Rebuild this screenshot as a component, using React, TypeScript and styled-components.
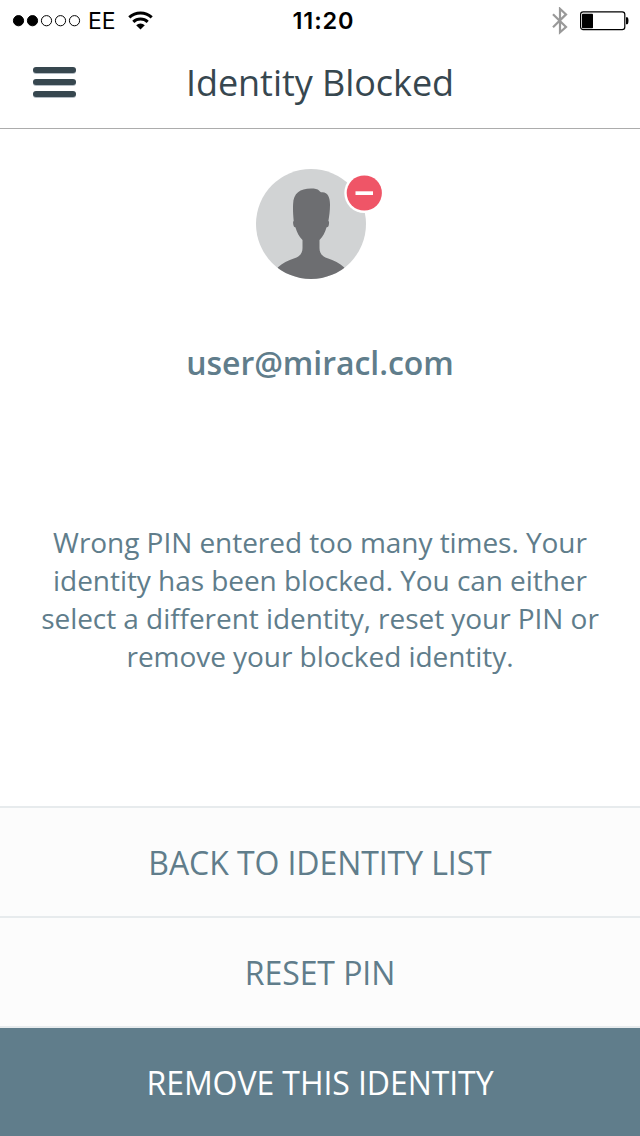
import React from "react";
import styled, { createGlobalStyle } from "styled-components";

const GlobalStyle = createGlobalStyle`
  *, *::before, *::after { box-sizing: border-box; }
  body { margin: 0; background: #fff; }
`;

const Screen = styled.div`
  display: flex;
  flex-direction: column;
  width: 640px;
  height: 1136px;
  overflow: hidden;
  background: #fff;
  color: #607d8b;
  font-family: "Open Sans", sans-serif;
`;

const StatusBar = styled.div`
  display: grid;
  grid-template-columns: 1fr auto 1fr;
  align-items: center;
  height: 40px;
  padding: 1px 11px 0 12px;
  color: #000;
  font-family: Inter, sans-serif;
`;

const StatusGroup = styled.div<{ $end?: boolean }>`
  display: flex;
  align-items: center;
  justify-content: ${(p) => (p.$end ? "flex-end" : "flex-start")};
`;

const Carrier = styled.span`
  margin: 0 12px 0 6px;
  font-size: 23px;
  line-height: 28px;
  font-weight: 400;
`;

const Clock = styled.span`
  padding-left: 6px;
  font-size: 23.5px;
  line-height: 28px;
  font-weight: 600;
  letter-spacing: 0.9px;
`;

const Header = styled.header`
  display: grid;
  grid-template-columns: 76px 1fr 76px;
  align-items: center;
  height: 89px;
  padding-bottom: 5px;
  border-bottom: 1px solid #acacac;
`;

const MenuButton = styled.button`
  display: flex;
  flex-direction: column;
  gap: 6px;
  width: 76px;
  padding: 0 0 0 32.5px;
  border: 0;
  background: none;
`;

const MenuBar = styled.span`
  width: 43px;
  height: 6px;
  border-radius: 3px;
  background: #37474f;
  box-shadow: 0 1px 0 #b4bcc4;
`;

const Title = styled.h1`
  margin: 0;
  padding-top: 2px;
  color: #37474f;
  font-size: 36px;
  line-height: 50px;
  font-weight: 400;
  letter-spacing: -0.05px;
  text-align: center;
`;

const Content = styled.main`
  display: flex;
  flex: 1;
  flex-direction: column;
  align-items: center;
  padding-top: 40px;
`;

const Avatar = styled.svg`
  display: block;
  width: 128px;
  height: 110px;
`;

const Email = styled.div`
  margin-top: 62px;
  font-size: 32px;
  line-height: 44px;
  font-weight: 600;
  letter-spacing: -0.05px;
`;

const Message = styled.p`
  width: 580px;
  margin: 138px 0 0;
  font-size: 28px;
  line-height: 38px;
  letter-spacing: -0.05px;
  text-align: center;
`;

const Actions = styled.div`
  display: flex;
  flex-direction: column;
`;

const ActionButton = styled.button<{ $filled?: boolean }>`
  height: 110px;
  padding: 2px 0 0;
  border: 0;
  border-top: 2px solid #e7ebed;
  background: ${(p) => (p.$filled ? "#607d8b" : "#fcfcfc")};
  color: ${(p) => (p.$filled ? "#fff" : "#607d8b")};
  font-family: inherit;
  font-size: 32px;
  line-height: 44px;
  letter-spacing: -0.08px;
  text-transform: uppercase;
`;

const SignalDots = () => (
  <svg width="70" height="14" viewBox="0 0 70 14" stroke="#000">
    {[0, 1, 2, 3, 4].map((i) => (
      <circle key={i} cx={6.5 + i * 14} cy="6.7" r="5.1" fill={i < 2 ? "#000" : "none"} />
    ))}
  </svg>
);

const WifiIcon = () => (
  <svg width="25" height="20" viewBox="0 0 25 20" fill="none" stroke="#000" strokeWidth="3">
    <path d="M1.3 6.4a16.2 16.2 0 0 1 22.4 0" />
    <path d="M5.3 10.9a10.4 10.4 0 0 1 14.4 0" />
    <path d="M12.5 18.4 8.2 14.2a6.2 6.2 0 0 1 8.6 0z" fill="#000" stroke="none" />
  </svg>
);

const BluetoothIcon = () => (
  <svg width="16" height="28" viewBox="0 0 16 28" fill="none" stroke="#999" strokeWidth="2.2">
    <path d="M1 7.2 14 20 8 25.4V1.8L14 7.4 1 20.2" />
  </svg>
);

const Battery = styled.svg`
  margin-left: 12px;
`;

const BatteryIcon = () => (
  <Battery width="49" height="20" viewBox="0 0 49 20">
    <rect x="0.6" y="0.9" width="44.2" height="17.8" rx="2.6" fill="none" stroke="#000" strokeWidth="1.2" />
    <rect x="2" y="2.7" width="11" height="14.6" rx="0.8" />
    <path d="M46 6.3h1.2c1.7 0 1.7 7 0 7H46z" />
  </Battery>
);

const BlockedAvatar = () => (
  <Avatar viewBox="0 0 128 110" overflow="visible">
    <defs>
      <clipPath id="avatar-clip">
        <circle cx="55" cy="55" r="55" />
      </clipPath>
    </defs>
    <circle cx="55" cy="55" r="55" fill="#d1d3d4" />
    <path
      clipPath="url(#avatar-clip)"
      fill="#6d6e71"
      d="M37.7 52C37.2 46 36.8 41 37.1 35C37.5 24 44 19.4 55 19.4C59 19.4 61.5 20 63 21.4C64 22.4 64.6 23.5 66.5 23.3C72 23.3 74.2 29 74 36C74 42 73.2 47 72.4 52C73.3 52.4 73.2 54 72.8 56C72.5 57.7 71.8 58.3 70.6 58.2C69.2 63 67 67.5 63.5 71V79C63.5 84 66 87.5 71.5 89.2C78 91.3 83.5 94 88.3 98.6V110H21.7V98.6C26.5 94 32 91.3 38.5 89.2C44 87.5 46.5 84 46.5 79V71C43 67.5 40.8 63 39.4 58.2C38.2 58.3 37.8 57.7 37.4 56C37 54 36.8 52.4 37.7 52Z"
    />
    <circle cx="108.3" cy="24" r="20" fill="#fff" />
    <circle cx="108.3" cy="24" r="17.6" fill="#ef5567" />
    <rect x="99.5" y="22.3" width="17.5" height="3.7" fill="#fff" />
  </Avatar>
);

export default function App() {
  return (
    <Screen>
      <GlobalStyle />
      <StatusBar>
        <StatusGroup>
          <SignalDots />
          <Carrier>EE</Carrier>
          <WifiIcon />
        </StatusGroup>
        <Clock>11:20</Clock>
        <StatusGroup $end>
          <BluetoothIcon />
          <BatteryIcon />
        </StatusGroup>
      </StatusBar>
      <Header>
        <MenuButton aria-label="Menu">
          <MenuBar />
          <MenuBar />
          <MenuBar />
        </MenuButton>
        <Title>Identity Blocked</Title>
      </Header>
      <Content>
        <BlockedAvatar />
        <Email>user@miracl.com</Email>
        <Message>
          Wrong PIN entered too many times. Your identity has been blocked. You can either select a
          different identity, reset your PIN or remove your blocked identity.
        </Message>
      </Content>
      <Actions>
        <ActionButton>Back to identity list</ActionButton>
        <ActionButton>Reset PIN</ActionButton>
        <ActionButton $filled>Remove this identity</ActionButton>
      </Actions>
    </Screen>
  );
}
